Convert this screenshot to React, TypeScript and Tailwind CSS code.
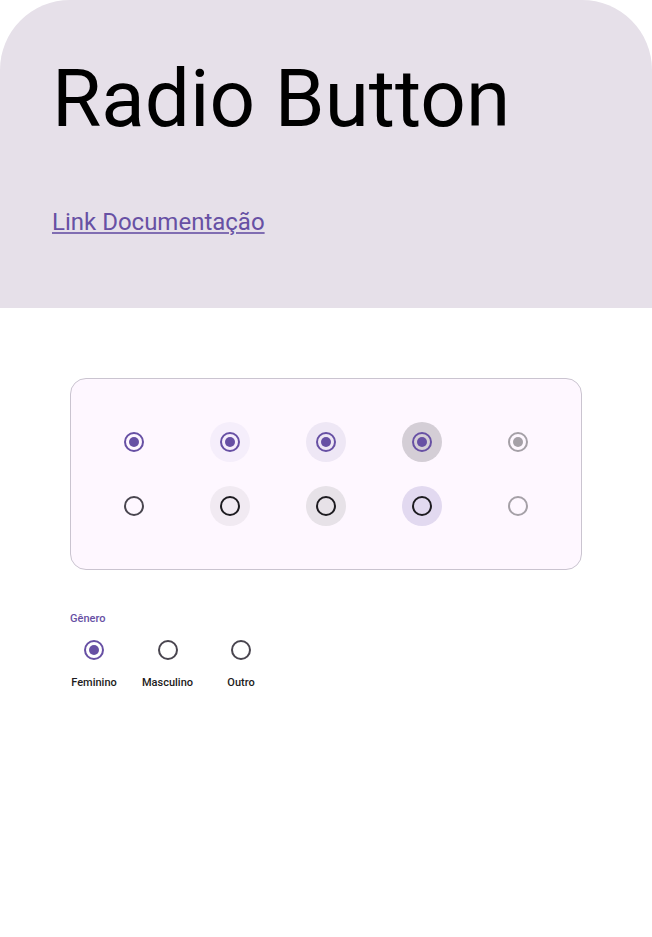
import React from "react";

type Tone = { ring: string; halo: string; label: string; checked?: boolean; disabled?: boolean };

const ROWS: Tone[][] = [
  [
    { label: "Selected, enabled", ring: "text-[#6750a4]", halo: "bg-transparent", checked: true },
    { label: "Selected, hovered", ring: "text-[#6750a4]", halo: "bg-[#f5eefb]", checked: true },
    { label: "Selected, focused", ring: "text-[#6750a4]", halo: "bg-[#eee7f5]", checked: true },
    { label: "Selected, pressed", ring: "text-[#6750a4]", halo: "bg-[#d4ced6]", checked: true },
    { label: "Selected, disabled", ring: "text-[#a5a0a7]", halo: "bg-transparent", checked: true, disabled: true },
  ],
  [
    { label: "Unselected, enabled", ring: "text-[#49454f]", halo: "bg-transparent" },
    { label: "Unselected, hovered", ring: "text-[#1d1b20]", halo: "bg-[#f1eaf2]" },
    { label: "Unselected, focused", ring: "text-[#1d1b20]", halo: "bg-[#e7e2e8]" },
    { label: "Unselected, pressed", ring: "text-[#1d1b20]", halo: "bg-[#e2d9f0]" },
    { label: "Unselected, disabled", ring: "text-[#a5a0a7]", halo: "bg-transparent", disabled: true },
  ],
];

const RADIO =
  "grid size-5 appearance-none place-content-center rounded-full border-2 border-current before:size-[10px] before:rounded-full checked:before:bg-current";

function StateRadio({ tone, name }: { tone: Tone; name: string }) {
  return (
    <label className={`grid size-10 place-items-center rounded-full ${tone.halo} ${tone.ring}`}>
      <input
        type="radio"
        name={name}
        aria-label={tone.label}
        defaultChecked={tone.checked}
        disabled={tone.disabled}
        className={RADIO}
      />
    </label>
  );
}

export default function App() {
  return (
    <div className="min-h-screen bg-white font-[Roboto,sans-serif]">
      <header className="rounded-t-[70px] bg-[#e6e0e9] px-[52px] pt-[51px] pb-[70px]">
        <h1 className="text-[80px] leading-[96px] text-black">Radio Button</h1>
        <div className="flex pt-[59px]">
          <a href="#docs" className="text-2xl leading-8 text-[#6750a4] underline decoration-[#6750a4]/80">
            Link Documentação
          </a>
        </div>
      </header>
      <main className="px-[70px] pt-[70px]">
        <section className="flex flex-col gap-6 rounded-2xl border border-[#cac4d0] bg-[#fef7ff] p-[43px]">
          {ROWS.map((row, r) => (
            <div key={r} className="flex justify-between">
              {row.map((tone, i) => (
                <StateRadio key={tone.label} tone={tone} name={`state-${r}-${i}`} />
              ))}
            </div>
          ))}
        </section>
        <fieldset className="mt-[41px] text-[11px] leading-4 font-medium">
          <legend className="text-[#6750a4]">Gênero</legend>
          <div className="flex gap-6">
            {["Feminino", "Masculino", "Outro"].map((name, i) => (
              <label key={name} className="flex min-w-12 flex-col items-center gap-0.5 text-[#1d1b20]">
                <span className={`grid h-[46px] place-items-center ${i === 0 ? "text-[#6750a4]" : "text-[#49454f]"}`}>
                  <input type="radio" name="genero" defaultChecked={i === 0} className={RADIO} />
                </span>
                {name}
              </label>
            ))}
          </div>
        </fieldset>
      </main>
    </div>
  );
}
